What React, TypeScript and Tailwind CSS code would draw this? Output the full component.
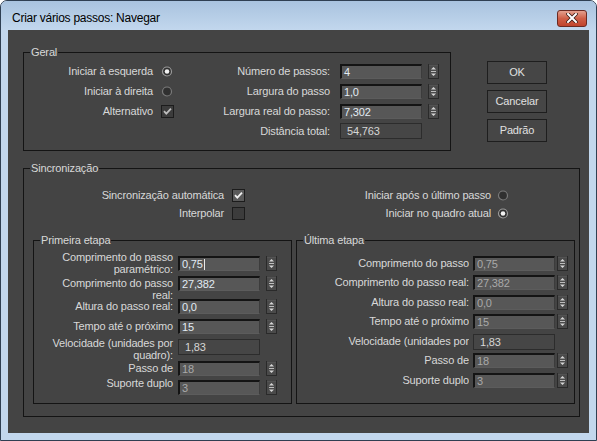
import React from "react";

const F = { fontFamily: '"Liberation Sans", Arial, sans-serif' };

function Radio({ checked }: { checked?: boolean }) {
  return (
    <svg width="13" height="13" viewBox="0 0 13 13" className="block">
      <circle cx="6" cy="6.5" r="4.5" fill="#303030" stroke={checked ? "#9a9a9a" : "#7a7a7a"} strokeWidth="1.2" />
      {checked && <circle cx="6" cy="6.5" r="2.3" fill="#f2f2f2" />}
    </svg>
  );
}

function Check({ checked, light }: { checked?: boolean; light?: boolean }) {
  return (
    <div className={light ? "w-[13px] h-[13px] border border-[#1c1c1c] bg-[#5a5a5a]" : "w-[13px] h-[13px] border border-[#1c1c1c] bg-[#3c3c3c]"}>
      {checked && (
        <svg width="11" height="11" viewBox="0 0 11 11" className="block">
          <path d="M2 5.2 L4.3 7.6 L9 2.6" fill="none" stroke={light ? "#f0f0f0" : "#bdbdbd"} strokeWidth="1.8" />
        </svg>
      )}
    </div>
  );
}

function Spinner() {
  return (
    <svg width="11" height="15" viewBox="0 0 11 15" className="block shrink-0">
      <rect x="0.5" y="0.5" width="10" height="14" fill="#4a4a4a" stroke="#2a2a2a" />
      <line x1="1" y1="1" x2="10" y2="1" stroke="#5c5c5c" />
      <path d="M3 5.5 L8 5.5 L5.5 3 Z" fill="#d6d6d6" />
      <line x1="3" y1="7.5" x2="8" y2="7.5" stroke="#bcbcbc" />
      <path d="M3 9.5 L8 9.5 L5.5 12 Z" fill="#d6d6d6" />
    </svg>
  );
}

function Field({ value, dim, caret }: { value: string; dim?: boolean; caret?: boolean }) {
  return (
    <div
      className={
        "h-[15px] w-[82px] shrink-0 flex items-center border-t-2 border-l-2 border-r border-b border-t-[#141414] border-l-[#141414] border-r-[#3c3c3c] border-b-[#5c5c5c] bg-[#575757] pl-[2px] text-[11px] leading-[12px] " +
        (dim ? "text-[#a9a9a9]" : "text-[#e2ebf3]")
      }
    >
      <span>{value}</span>
      {caret && <span className="ml-[1px] inline-block w-[1px] h-[11px] bg-[#e8e8e8]" />}
    </div>
  );
}

function ReadOnly({ value }: { value: string }) {
  return (
    <div className="h-[16px] w-[82px] shrink-0 flex items-center border border-[#2c2c2c] bg-[#464646] pl-[6px] text-[11px] text-[#d6d6d6]">
      {value}
    </div>
  );
}

function Group({ label, className, children }: { label: string; className: string; children: React.ReactNode }) {
  return (
    <div className={"relative border border-[#141414] " + className}>
      <span className="absolute -top-[8px] left-[6px] px-[1px] bg-[#444444] text-[11px] leading-[14px] text-[#d8d8d8]">
        {label}
      </span>
      {children}
    </div>
  );
}

function Btn({ children }: { children: React.ReactNode }) {
  return (
    <div className="w-[60px] h-[23px] border border-[#1e1e1e] bg-[#464646] flex items-center justify-center text-[11px] text-[#e0e0e0]">
      {children}
    </div>
  );
}

type Row = { lines: string[]; h: string; lmt: string; imt: string; kind: "f" | "r"; value: string; dim?: boolean; caret?: boolean };

const firstRows: Row[] = [
  { lines: ["Comprimento do passo", "paramétrico:"], h: "h-[25px]", lmt: "mt-[0px]", imt: "mt-[5px]", kind: "f", value: "0,75", caret: true },
  { lines: ["Comprimento do passo", "real:"], h: "h-[23px]", lmt: "mt-[1px]", imt: "mt-[0px]", kind: "f", value: "27,382" },
  { lines: ["Altura do passo real:"], h: "h-[20px]", lmt: "mt-[1px]", imt: "mt-[0px]", kind: "f", value: "0,0" },
  { lines: ["Tempo até o próximo"], h: "h-[18px]", lmt: "mt-[1px]", imt: "mt-[0px]", kind: "f", value: "15" },
  { lines: ["Velocidade (unidades por", "quadro):"], h: "h-[24px]", lmt: "mt-[0px]", imt: "mt-[2px]", kind: "r", value: "1,83" },
  { lines: ["Passo de"], h: "h-[16px]", lmt: "mt-[1px]", imt: "mt-[0px]", kind: "f", value: "18", dim: true },
  { lines: ["Suporte duplo"], h: "h-[18px]", lmt: "mt-[0px]", imt: "mt-[3px]", kind: "f", value: "3", dim: true },
];

const lastRows: { label: string; h: string; kind: "f" | "r"; value: string }[] = [
  { label: "Comprimento do passo", h: "h-[19px]", kind: "f", value: "0,75" },
  { label: "Comprimento do passo real:", h: "h-[20px]", kind: "f", value: "27,382" },
  { label: "Altura do passo real:", h: "h-[19px]", kind: "f", value: "0,0" },
  { label: "Tempo até o próximo", h: "h-[20px]", kind: "f", value: "15" },
  { label: "Velocidade (unidades por", h: "h-[19px]", kind: "r", value: "1,83" },
  { label: "Passo de", h: "h-[20px]", kind: "f", value: "18" },
  { label: "Suporte duplo", h: "h-[15px]", kind: "f", value: "3" },
];

export default function App() {
  return (
    <div className="w-[597px] h-[441px] bg-white" style={F}>
      <div className="w-[597px] h-[441px] flex flex-col border border-[#2f3f52] rounded-t-[7px] bg-[#c2d7ed] overflow-hidden">
        {/* Title bar */}
        <div className="h-[29px] shrink-0 flex items-center pt-[5px] pl-[11px] pr-[9px] bg-gradient-to-b from-[#a9c3df] to-[#c2d7ed]">
          <span className="text-[12px] tracking-[-0.25px] text-black">Criar vários passos: Navegar</span>
          <div className="ml-auto w-[30px] h-[17px] rounded-[3px] border border-[#6b2a22] bg-gradient-to-b from-[#e3a08f] via-[#cf5f47] to-[#c0432c] flex items-center justify-center">
            <svg width="12" height="10" viewBox="0 0 12 10">
              <path d="M2 1 L10 9 M10 1 L2 9" stroke="#3a1a14" strokeWidth="3.6" strokeLinecap="square" />
              <path d="M2 1 L10 9 M10 1 L2 9" stroke="#ffffff" strokeWidth="2" strokeLinecap="square" />
            </svg>
          </div>
        </div>
        {/* Client */}
        <div className="flex-1 mx-[7px] mb-[7px] bg-[#444444] text-[11px] tracking-[-0.15px] text-[#d8d8d8] pl-[15px] pt-[22px]">
          <div className="flex items-start">
            <Group label="Geral" className="w-[428px] h-[99px]">
              <div className="flex pt-[8px]">
                <div className="w-[150px] flex flex-col">
                  <div className="h-[20px] flex items-center justify-end">
                    <span>Iniciar à esquerda</span>
                    <div className="ml-[8px]"><Radio checked /></div>
                  </div>
                  <div className="h-[20px] flex items-center justify-end">
                    <span>Iniciar à direita</span>
                    <div className="ml-[8px]"><Radio /></div>
                  </div>
                  <div className="h-[20px] flex items-center justify-end">
                    <span>Alternativo</span>
                    <div className="ml-[8px]"><Check checked /></div>
                  </div>
                </div>
                <div className="flex flex-col">
                  {[
                    ["Número de passos:", "4"],
                    ["Largura do passo", "1,0"],
                    ["Largura real do passo:", "7,302"],
                  ].map(([l, v]) => (
                    <div key={l} className="h-[20px] flex items-center">
                      <span className="w-[156px] text-right">{l}</span>
                      <div className="ml-[10px]"><Field value={v} /></div>
                      <div className="ml-[6px]"><Spinner /></div>
                    </div>
                  ))}
                  <div className="h-[20px] flex items-center">
                    <span className="w-[156px] text-right">Distância total:</span>
                    <div className="ml-[10px]"><ReadOnly value="54,763" /></div>
                  </div>
                </div>
              </div>
            </Group>
            <div className="ml-[36px] mt-[9px] flex flex-col gap-[6px]">
              <Btn>OK</Btn>
              <Btn>Cancelar</Btn>
              <Btn>Padrão</Btn>
            </div>
          </div>

          <Group label="Sincronização" className="mt-[17px] w-[557px] h-[249px]">
            <div className="pt-[17px] grid grid-cols-[221px_265px] auto-rows-[18px]">
              <div className="flex items-center justify-end">
                <span>Sincronização automática</span>
                <div className="ml-[8px]"><Check checked light /></div>
              </div>
              <div className="flex items-center justify-end">
                <span>Iniciar após o último passo</span>
                <div className="ml-[6px]"><Radio /></div>
              </div>
              <div className="flex items-center justify-end">
                <span>Interpolar</span>
                <div className="ml-[8px]"><Check /></div>
              </div>
              <div className="flex items-center justify-end">
                <span>Iniciar no quadro atual</span>
                <div className="ml-[6px]"><Radio checked /></div>
              </div>
            </div>
            <div className="mt-[18px] ml-[9px] flex">
              <Group label="Primeira etapa" className="w-[259px] h-[164px]">
                <div className="pt-[10px] flex flex-col">
                  {firstRows.map((r) => (
                    <div key={r.lines[0] + r.value} className={"flex items-start " + r.h}>
                      <div className={"w-[139px] text-right leading-[12px] " + r.lmt}>
                        {r.lines.map((t) => (
                          <div key={t}>{t}</div>
                        ))}
                      </div>
                      <div className={"ml-[5px] flex items-start " + r.imt}>
                        {r.kind === "f" ? <Field value={r.value} dim={r.dim} caret={r.caret} /> : <ReadOnly value={r.value} />}
                        {r.kind === "f" && <div className="ml-[6px]"><Spinner /></div>}
                      </div>
                    </div>
                  ))}
                </div>
              </Group>
              <Group label="Última etapa" className="ml-[4px] w-[279px] h-[164px]">
                <div className="pt-[15px] flex flex-col">
                  {lastRows.map((r) => (
                    <div key={r.label} className={"flex items-start " + r.h}>
                      <div className="w-[172px] text-right leading-[15px] whitespace-nowrap overflow-hidden">{r.label}</div>
                      <div className="ml-[4px] flex items-start">
                        {r.kind === "f" ? <Field value={r.value} dim /> : <ReadOnly value={r.value} />}
                        {r.kind === "f" && <div className="ml-[2px]"><Spinner /></div>}
                      </div>
                    </div>
                  ))}
                </div>
              </Group>
            </div>
          </Group>
        </div>
      </div>
    </div>
  );
}
